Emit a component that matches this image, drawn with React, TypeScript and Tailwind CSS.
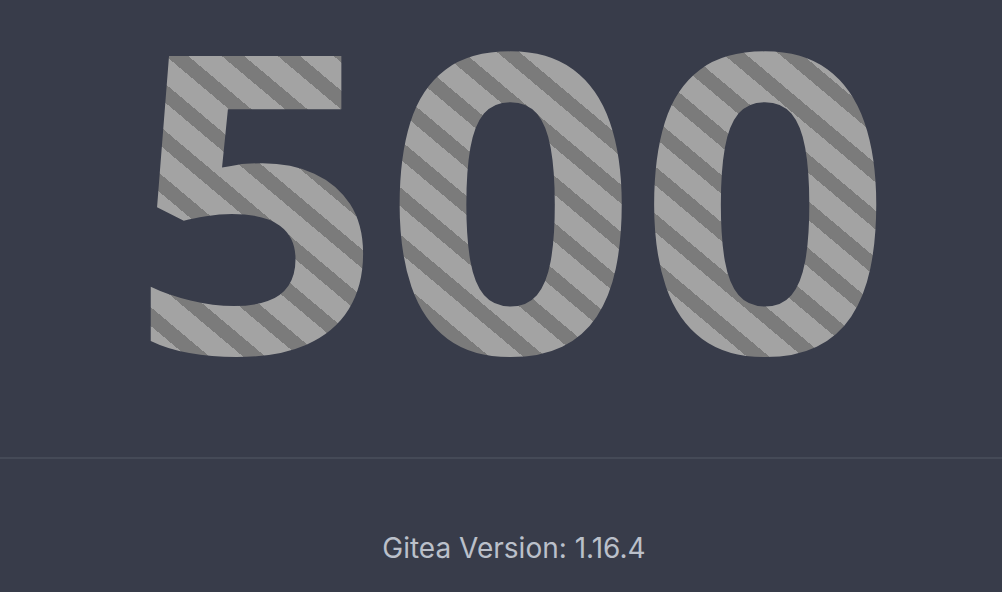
export default function App() {
  return (
    <div className="min-h-screen w-full overflow-hidden bg-[#383c4a]">
      <div className="flex h-[457px] items-start justify-center pl-[20px]">
        <span className="block scale-x-[1.07] bg-[repeating-linear-gradient(42deg,#a3a3a3_0px,#a3a3a3_21px,#7b7b7b_21px,#7b7b7b_35px)] bg-clip-text font-['Open_Sans',sans-serif] text-[416px] font-bold leading-[383px] text-transparent">
          500
        </span>
      </div>
      <div className="h-[2px] w-full bg-[#454a57]" />
      <p className="mt-[75px] pl-[26px] text-center font-['Inter',sans-serif] text-[28px] leading-none text-[#bbc0ca]">
        Gitea Version: 1.16.4
      </p>
    </div>
  );
}
